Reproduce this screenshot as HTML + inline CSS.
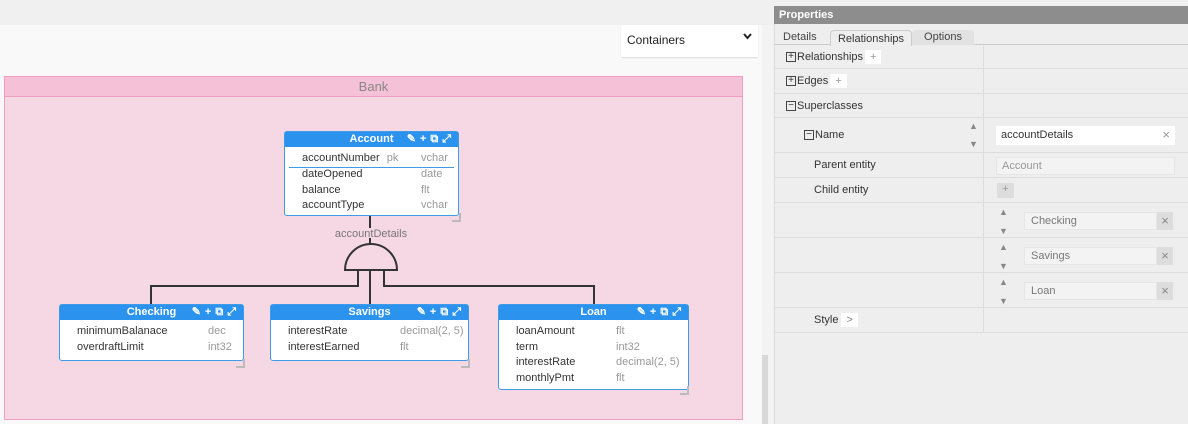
<!DOCTYPE html>
<html><head><style>
*{box-sizing:border-box;margin:0;padding:0}
body{width:1188px;height:424px;overflow:hidden;background:#f0f0f0;font-family:"Liberation Sans",sans-serif;position:relative;font-size:11px;color:#333}
.abs{position:absolute}
.canvas{left:0;top:25px;width:762px;height:399px;background:#f9f9f9}
.ent{position:absolute;background:#fff;border:1px solid #3d9bea;border-radius:3px}
.ent .h{height:15px;background:#2b93ee;color:#fff;font-weight:bold;font-size:11px;text-align:center;line-height:15px;position:relative}
.ent .ic{position:absolute;right:3px;top:0;font-size:11px;letter-spacing:4px}
.row{position:absolute;font-size:11px;color:#333;white-space:nowrap}
.t{color:#999}
.corner{position:absolute;width:9px;height:9px;border-right:2px solid #bbb;border-bottom:2px solid #bbb}
.pr{position:absolute;left:775px;width:413px;border-bottom:1px solid #ddd;font-size:11px;color:#333}
.pr .l{position:absolute;top:0;bottom:0;display:flex;align-items:center}
.sep{position:absolute;left:983px;width:1px;background:#ddd}
.box{display:inline-block;width:10px;height:10px;border:1px solid #444;position:relative;margin-right:1px;font-size:10px;line-height:8px;text-align:center}
.sel{position:absolute;background:#f3f3f3;border:1px solid #e6e6e6;color:#777;font-size:11px;padding-left:6px;display:flex;align-items:center}
.x{position:absolute;background:#ddd;color:#888;text-align:center;font-size:13px;line-height:17px}
.arr{position:absolute;color:#888;font-size:9px}
</style></head><body>
<div class="abs canvas"></div>
<div class="abs" style="left:762px;top:25px;width:11px;height:399px;background:#f3f3f3"></div>
<div class="abs" style="left:762px;top:355px;width:6px;height:69px;background:#d8d8d8"></div>
<div class="abs" style="left:621px;top:25px;width:137px;height:32px;background:#fff;box-shadow:0 1px 1px #ddd;font-size:12px;color:#222;padding:8px 0 0 6px">Containers<svg style="position:absolute;right:6px;top:8px" width="9" height="7"><path d="M1 1 L4.5 5 L8 1" stroke="#222" stroke-width="2" fill="none"/></svg></div>
<div class="abs" style="left:4px;top:76px;width:739px;height:344px;background:#f6d8e4;border:1px solid #ef9dc0"></div>
<div class="abs" style="left:4px;top:76px;width:739px;height:21px;background:#f4c1d6;border:1px solid #ef9dc0;text-align:center;color:#888;font-size:13px;line-height:19px">Bank</div>
<svg class="abs" style="left:0;top:0" width="760" height="424">
<g stroke="#333" stroke-width="2" fill="none">
<line x1="370" y1="216" x2="370" y2="228"/><line x1="370" y1="238" x2="370" y2="245"/>
<path d="M345 270 A26 26 0 0 1 397 270 Z"/>
<path d="M358 270 V286 H151 V304"/>
<path d="M384 270 V286 H594 V304"/>
<line x1="370" y1="270" x2="370" y2="304"/>
</g>
<text x="371" y="237" font-size="11" fill="#777" text-anchor="middle" font-family="Liberation Sans">accountDetails</text>
</svg>
<!-- Account -->
<div class="ent" style="left:284px;top:131px;width:175px;height:85px"><div class="h">Account<span class="ic">✎+⧉⤢</span></div>
<div class="abs" style="left:4px;top:35px;width:165px;height:1px;background:#3d9bea"></div>
<div class="row" style="left:17px;top:20px">accountNumber <span class="t" style="margin-left:4px">pk</span></div><div class="row t" style="left:136px;top:20px">vchar</div>
<div class="row" style="left:17px;top:36px">dateOpened</div><div class="row t" style="left:136px;top:36px">date</div>
<div class="row" style="left:17px;top:52px">balance</div><div class="row t" style="left:136px;top:52px">flt</div>
<div class="row" style="left:17px;top:67px">accountType</div><div class="row t" style="left:136px;top:67px">vchar</div>
</div><div class="corner" style="left:452px;top:213px"></div>
<!-- Checking -->
<div class="ent" style="left:59px;top:304px;width:185px;height:57px"><div class="h">Checking<span class="ic">✎+⧉⤢</span></div>
<div class="row" style="left:17px;top:20px">minimumBalanace</div><div class="row t" style="left:148px;top:20px">dec</div>
<div class="row" style="left:17px;top:36px">overdraftLimit</div><div class="row t" style="left:148px;top:36px">int32</div>
</div><div class="corner" style="left:236px;top:359px"></div>
<!-- Savings -->
<div class="ent" style="left:270px;top:304px;width:199px;height:57px"><div class="h">Savings<span class="ic">✎+⧉⤢</span></div>
<div class="row" style="left:17px;top:20px">interestRate</div><div class="row t" style="left:129px;top:20px">decimal(2, 5)</div>
<div class="row" style="left:17px;top:36px">interestEarned</div><div class="row t" style="left:129px;top:36px">flt</div>
</div><div class="corner" style="left:461px;top:359px"></div>
<!-- Loan -->
<div class="ent" style="left:498px;top:304px;width:191px;height:86px"><div class="h">Loan<span class="ic">✎+⧉⤢</span></div>
<div class="row" style="left:17px;top:20px">loanAmount</div><div class="row t" style="left:117px;top:20px">flt</div>
<div class="row" style="left:17px;top:36px">term</div><div class="row t" style="left:117px;top:36px">int32</div>
<div class="row" style="left:17px;top:51px">interestRate</div><div class="row t" style="left:117px;top:51px">decimal(2, 5)</div>
<div class="row" style="left:17px;top:67px">monthlyPmt</div><div class="row t" style="left:117px;top:67px">flt</div>
</div><div class="corner" style="left:680px;top:386px"></div>
<!-- right panel -->
<div class="abs" style="left:774px;top:6px;width:414px;height:418px;background:#eeeeee;border-left:1px solid #ddd"></div>
<div class="abs" style="left:774px;top:6px;width:414px;height:18px;background:#8d8d8d;color:#fff;font-size:11px;font-weight:bold;padding:3px 0 0 5px">Properties</div>
<div class="abs" style="left:775px;top:29px;width:413px;height:16px;border-bottom:1px solid #ccc"></div>
<div class="abs" style="left:783px;top:29px;font-size:11px;color:#444;padding-top:2px">Details</div>
<div class="abs" style="left:830px;top:30px;width:82px;height:16px;background:#eee;border:1px solid #ccc;border-bottom:none;border-radius:4px 4px 0 0;font-size:11px;text-align:center;padding-top:2px">Relationships</div>
<div class="abs" style="left:912px;top:30px;width:62px;height:15px;background:#e2e2e2;border-radius:4px 4px 0 0;font-size:11px;text-align:center;padding-top:1px;color:#444">Options</div>
<div class="sep" style="top:46px;height:287px"></div>
<div class="pr" style="top:46px;height:23px"><div class="l" style="left:11px"><span class="box">+</span>Relationships<span style="background:#fff;color:#999;padding:1px 5px;margin-left:2px">+</span></div></div>
<div class="pr" style="top:69px;height:25px"><div class="l" style="left:11px"><span class="box">+</span>Edges<span style="background:#fff;color:#999;padding:1px 5px;margin-left:2px">+</span></div></div>
<div class="pr" style="top:94px;height:24px"><div class="l" style="left:11px"><span class="box">−</span>Superclasses</div></div>
<div class="pr" style="top:118px;height:35px"><div class="l" style="left:29px"><span class="box">−</span>Name</div></div>
<div class="arr" style="left:969px;top:121px">▲</div><div class="arr" style="left:969px;top:139px">▼</div>
<div class="abs" style="left:996px;top:126px;width:179px;height:19px;background:#fff;font-size:11px;padding:3px 0 0 5px">accountDetails<span style="position:absolute;right:5px;top:1px;color:#999;font-size:13px">×</span></div>
<div class="pr" style="top:153px;height:25px"><div class="l" style="left:39px">Parent entity</div></div>
<div class="abs" style="left:996px;top:157px;width:179px;height:18px;background:#f3f3f3;border:1px solid #e6e6e6;color:#999;font-size:11px;padding:2px 0 0 5px">Account</div>
<div class="pr" style="top:178px;height:25px"><div class="l" style="left:39px">Child entity</div></div>
<div class="abs" style="left:997px;top:183px;width:17px;height:15px;background:#ddd;color:#999;text-align:center;font-size:11px">+</div>
<div class="pr" style="top:203px;height:35px"></div>
<div class="pr" style="top:238px;height:35px"></div>
<div class="pr" style="top:273px;height:35px"></div>
<div class="arr" style="left:999px;top:207px">▲</div><div class="arr" style="left:999px;top:226px">▼</div>
<div class="arr" style="left:999px;top:242px">▲</div><div class="arr" style="left:999px;top:261px">▼</div>
<div class="arr" style="left:999px;top:277px">▲</div><div class="arr" style="left:999px;top:296px">▼</div>
<div class="sel" style="left:1024px;top:212px;width:133px;height:18px">Checking</div><div class="x" style="left:1157px;top:212px;width:16px;height:18px">×</div>
<div class="sel" style="left:1024px;top:247px;width:133px;height:18px">Savings</div><div class="x" style="left:1157px;top:247px;width:16px;height:18px">×</div>
<div class="sel" style="left:1024px;top:282px;width:133px;height:18px">Loan</div><div class="x" style="left:1157px;top:282px;width:16px;height:18px">×</div>
<div class="pr" style="top:308px;height:25px"><div class="l" style="left:39px">Style<span style="background:#fff;color:#888;padding:1px 5px;margin-left:3px">&gt;</span></div></div>
</body></html>
